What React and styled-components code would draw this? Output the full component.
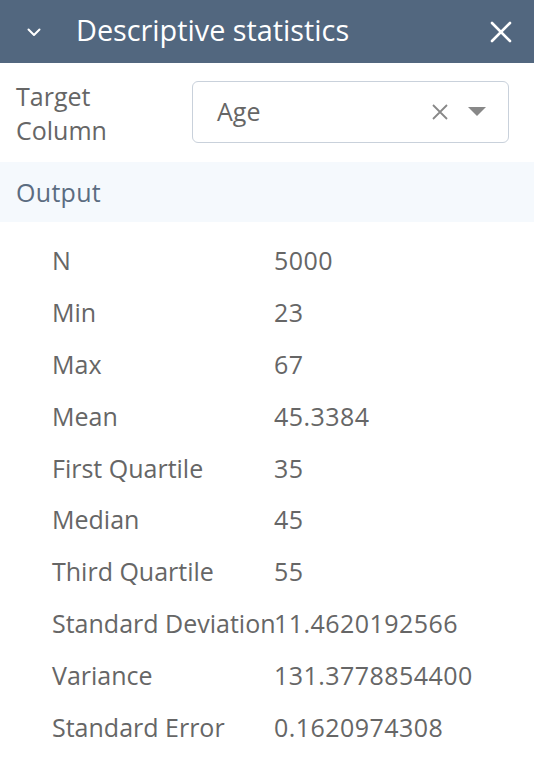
import styled, { createGlobalStyle } from "styled-components";

const GlobalStyle = createGlobalStyle`
  body {
    margin: 0;
    background: #fff;
    font-family: "Open Sans", "Noto Sans", sans-serif;
  }
`;

const Panel = styled.div`
  width: 534px;
  display: flex;
  flex-direction: column;
`;

const Header = styled.div`
  height: 63px;
  background: #52677f;
  display: flex;
  align-items: center;
  padding: 0 20px 0 22px;
  color: #fff;
`;

const Title = styled.div`
  flex: 1;
  font-size: 28.8px;
  margin-left: 30px;
  margin-top: -4px;
`;

const IconButton = styled.div`
  display: flex;
  align-items: center;
  justify-content: center;
`;

const FieldRow = styled.div`
  display: flex;
  align-items: center;
  padding: 13px 25px 14px 16px;
  height: 72px;
`;

const FieldLabel = styled.div`
  width: 176px;
  font-size: 25px;
  line-height: 34px;
  color: #666;
  margin-top: 2px;
`;

const Select = styled.div`
  flex: 1;
  height: 60px;
  border: 1px solid #c9d1db;
  border-radius: 6px;
  display: flex;
  align-items: center;
  padding: 0 22px 0 24px;
  font-size: 25px;
  color: #666;
`;

const SelectValue = styled.div`
  flex: 1;
  margin-top: -2px;
`;

const SelectTools = styled.div`
  display: flex;
  align-items: center;
  gap: 18px;
`;

const Section = styled.div`
  height: 60px;
  background: #f5f9fd;
  display: flex;
  align-items: center;
  padding-left: 16px;
  font-size: 25px;
  letter-spacing: 0.3px;
  color: #5b6c81;
`;

const StatList = styled.div`
  padding: 12px 0 0 52px;
`;

const StatRow = styled.div`
  display: flex;
  height: 51.9px;
  align-items: center;
  font-size: 25px;
  color: #666;
`;

const StatName = styled.div`
  width: 222px;
  white-space: nowrap;
`;

const StatValue = styled.div`
  letter-spacing: 0.45px;
  white-space: nowrap;
`;

const stats = [
  ["N", "5000"],
  ["Min", "23"],
  ["Max", "67"],
  ["Mean", "45.3384"],
  ["First Quartile", "35"],
  ["Median", "45"],
  ["Third Quartile", "55"],
  ["Standard Deviation", "11.4620192566"],
  ["Variance", "131.3778854400"],
  ["Standard Error", "0.1620974308"],
];

export default function App() {
  return (
    <Panel>
      <GlobalStyle />
      <Header>
        <IconButton>
          <svg width="24" height="24" viewBox="0 0 24 24" fill="none" stroke="#fff" strokeWidth="2" strokeLinecap="round" strokeLinejoin="round">
            <path d="M6.5 9.5l5.5 5.5 5.5-5.5" />
          </svg>
        </IconButton>
        <Title>Descriptive statistics</Title>
        <IconButton>
          <svg width="26" height="26" viewBox="0 0 26 26" fill="none" stroke="#fff" strokeWidth="2.6" strokeLinecap="round">
            <path d="M4 4l18 18M22 4L4 22" />
          </svg>
        </IconButton>
      </Header>
      <FieldRow>
        <FieldLabel>
          Target
          <br />
          Column
        </FieldLabel>
        <Select>
          <SelectValue>Age</SelectValue>
          <SelectTools>
            <svg width="20" height="20" viewBox="0 0 20 20" fill="none" stroke="#888" strokeWidth="1.8">
              <path d="M3 3l14 14M17 3L3 17" />
            </svg>
            <svg width="18" height="10" viewBox="0 0 18 10">
              <path d="M0 0h18L9 9z" fill="#888" />
            </svg>
          </SelectTools>
        </Select>
      </FieldRow>
      <Section>Output</Section>
      <StatList>
        {stats.map(([name, value]) => (
          <StatRow key={name}>
            <StatName>{name}</StatName>
            <StatValue>{value}</StatValue>
          </StatRow>
        ))}
      </StatList>
    </Panel>
  );
}
